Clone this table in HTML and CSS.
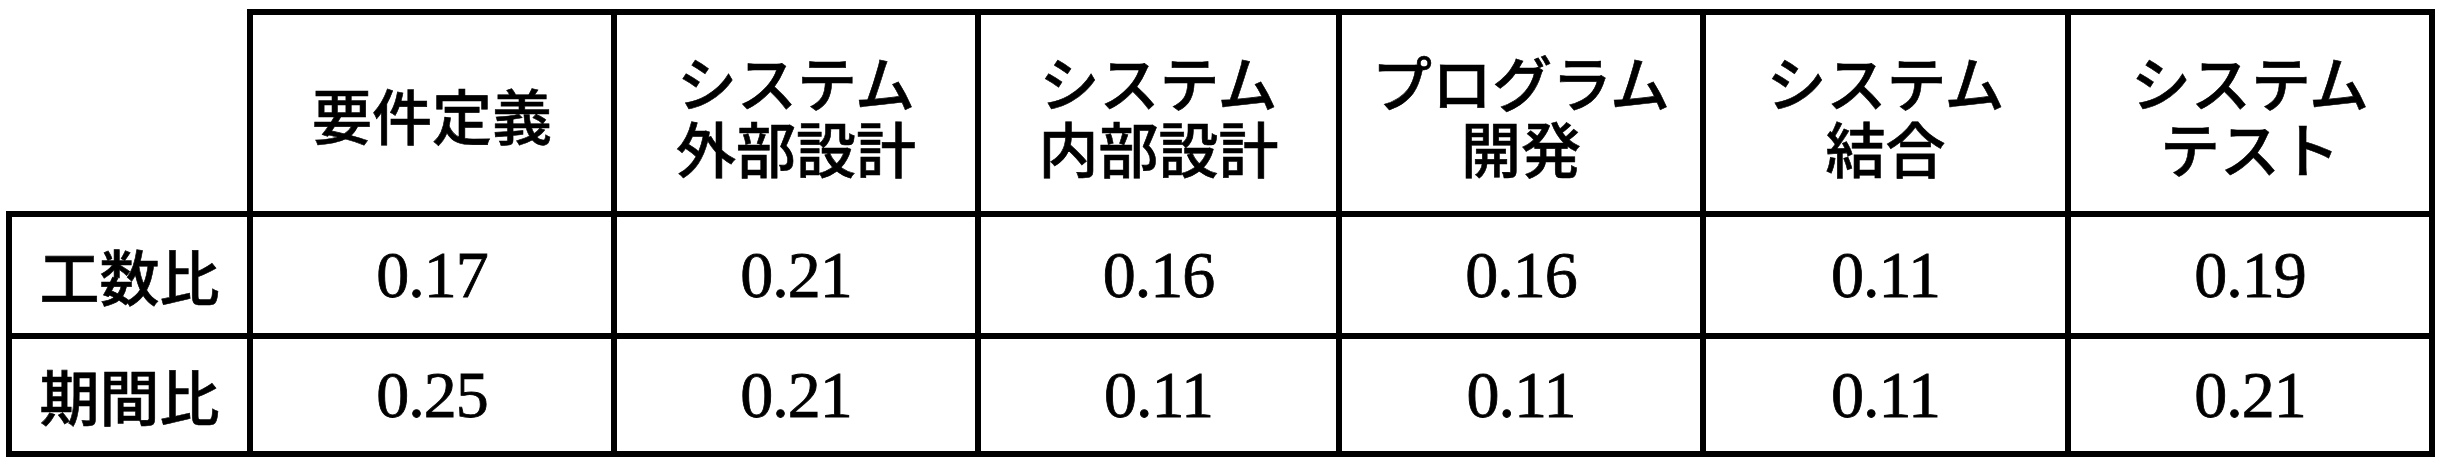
FILE: index.html
```html
<!DOCTYPE html>
<html lang="ja">
<head>
<meta charset="utf-8">
<link rel="stylesheet" href="styles.css">
<title>工数比・期間比</title>
</head>
<body>
<div class="ratio-table">
  <div class="cell corner"></div>
  <div class="cell head first">要件定義</div>
  <div class="cell head"><span class="ln">システム</span><span class="ln">外部設計</span></div>
  <div class="cell head"><span class="ln">システム</span><span class="ln">内部設計</span></div>
  <div class="cell head"><span class="ln">プログラム</span><span class="ln">開発</span></div>
  <div class="cell head"><span class="ln">システム</span><span class="ln">結合</span></div>
  <div class="cell head"><span class="ln">システム</span><span class="ln">テスト</span></div>

  <div class="cell label">工数比</div>
  <div class="cell num">0.17</div>
  <div class="cell num">0.21</div>
  <div class="cell num">0.16</div>
  <div class="cell num">0.16</div>
  <div class="cell num">0.11</div>
  <div class="cell num">0.19</div>

  <div class="cell label">期間比</div>
  <div class="cell num">0.25</div>
  <div class="cell num">0.21</div>
  <div class="cell num">0.11</div>
  <div class="cell num">0.11</div>
  <div class="cell num">0.11</div>
  <div class="cell num">0.21</div>
</div>
</body>
</html>
```
FILE: styles.css
```css
html, body {
  margin: 0;
  padding: 0;
  background: #ffffff;
}

body {
  padding: 9px 0 0 6px;
  color: #000000;
}

.ratio-table {
  display: grid;
  grid-template-columns: 247px 364px 364px 361px 364px 365px 364px;
  grid-template-rows: 208px 122px 118px;
}

.cell {
  box-sizing: border-box;
  display: flex;
  flex-direction: column;
  align-items: center;
  justify-content: center;
  text-align: center;
  border-right: 6px solid #000;
  border-bottom: 6px solid #000;
}

.head {
  border-top: 6px solid #000;
  font-family: "Noto Sans CJK JP", "Noto Sans", sans-serif;
  font-weight: 500;
  font-size: 60px;
  line-height: 1;
  gap: 6px;
  padding-top: 2px;
  -webkit-text-stroke: 0.6px #000;
}

.ln {
  display: block;
  white-space: nowrap;
}

.label {
  border-left: 6px solid #000;
  font-family: "Noto Sans CJK JP", "Noto Sans", sans-serif;
  font-weight: 500;
  font-size: 60px;
  line-height: 1;
  -webkit-text-stroke: 0.6px #000;
}

.num {
  font-family: "Liberation Serif", "Times New Roman", serif;
  font-size: 66px;
  line-height: 1;
  letter-spacing: -1px;
  -webkit-text-stroke: 0.8px #000;
}
```
